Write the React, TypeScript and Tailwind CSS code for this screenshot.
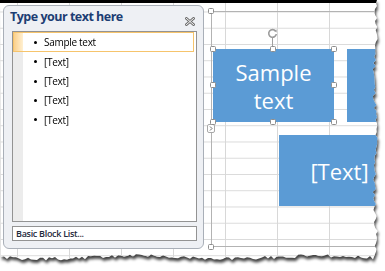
import React from 'react';

// torn paper edge on the right and bottom of the screenshot
function tornEdge() {
  let seed = 11;
  const rnd = () => {
    seed = (seed * 9301 + 49297) % 233280;
    return seed / 233280;
  };
  const pts: string[] = ['0px 0px', '377px 0px'];
  for (let y = 3; y <= 252; y += 3) {
    const x = 373.5 + rnd() * 3.5 + Math.sin(y / 17) * 1;
    pts.push(`${x.toFixed(1)}px ${y}px`);
  }
  for (let x = 373; x >= 0; x -= 3) {
    const y = 255.5 + rnd() * 3.5 + Math.sin(x / 29) * 1.5;
    pts.push(`${x}px ${y.toFixed(1)}px`);
  }
  return `polygon(${pts.join(',')})`;
}

const rows = ['Sample text', '[Text]', '[Text]', '[Text]', '[Text]'];

const handles = [
  'left-[213px] top-[49px]',
  'left-[273px] top-[49px]',
  'left-[334px] top-[49px]',
  'left-[213px] top-[85px]',
  'left-[334px] top-[85px]',
  'left-[213px] top-[122px]',
  'left-[273px] top-[122px]',
  'left-[334px] top-[122px]',
  'left-[211px] top-[11px]',
  'left-[211px] top-[247px]',
];

function CloseIcon() {
  return (
    <svg width="10" height="9" viewBox="0 0 10 9">
      <path d="M1.5 1.5 L8.5 7.5 M8.5 1.5 L1.5 7.5" stroke="#707070" strokeWidth="2.8" strokeLinecap="square" />
      <path d="M1.5 1.5 L8.5 7.5 M8.5 1.5 L1.5 7.5" stroke="#f4f4f4" strokeWidth="1" strokeLinecap="square" />
    </svg>
  );
}

function RotateHandle() {
  return (
    <svg width="11" height="11" viewBox="0 0 11 11">
      <path d="M8.6 3.2 A3.8 3.8 0 1 0 9.3 6" fill="none" stroke="#9c9c9c" strokeWidth="1.6" />
      <path d="M6.8 2.6 L9.6 1.6 L9.6 4.6 Z" fill="#9c9c9c" />
    </svg>
  );
}

function TextPane() {
  return (
    <div className="absolute left-[3px] top-[5px] w-[201px] h-[244px] rounded-[6px] border border-[#a9afb8] bg-[#eef0f4] flex flex-col">
      <div className="h-[25px] flex items-start justify-between pl-[6px] pr-[8px] pt-[3px]">
        <span className="text-[12.5px] leading-[16px] font-bold text-[#1c3d73] tracking-[-0.5px]">Type your text here</span>
        <span className="mt-[8px]">
          <CloseIcon />
        </span>
      </div>
      <div className="relative ml-[8px] mr-[6px] h-[191px] border border-[#939393] bg-white">
        <div className="absolute left-0 top-0 bottom-0 w-[10px] bg-[#ececec]" />
        <div className="relative flex flex-col">
          {rows.map((t, i) => (
            <div
              key={i}
              className={
                i === 0
                  ? 'flex items-center h-[20px] mr-[2px] border border-[#f6c46c] bg-white'
                  : 'flex items-center h-[19.4px]'
              }
            >
              {i === 0 ? (
                <div className="w-[9px] h-full bg-gradient-to-r from-[#fbd08a] to-[#fff0d2]" />
              ) : (
                <div className="w-[10px] h-full" />
              )}
              <span className="ml-[11px] w-[3px] h-[3px] rounded-full bg-black" />
              <span className="ml-[7px] text-[10px] leading-[14px] tracking-[-0.3px] text-black">{t}</span>
            </div>
          ))}
        </div>
      </div>
      <div className="ml-[8px] mr-[6px] mt-[4px] h-[15px] border border-[#939393] bg-white flex items-center pl-[3px]">
        <span className="text-[9px] leading-[12px] font-semibold tracking-[-0.3px] text-[#1f2a3c]">Basic Block List...</span>
      </div>
    </div>
  );
}

export default function App() {
  const clip = tornEdge();
  return (
    <div className="relative w-[385px] h-[271px] bg-white overflow-hidden font-['Open_Sans','Noto_Sans',sans-serif]">
      <div className="[filter:drop-shadow(1.5px_3px_1.5px_rgba(0,0,0,0.75))]">
        <div
          className="relative w-[380px] h-[262px] bg-white [background-image:linear-gradient(to_right,#d8d8d8_1px,transparent_1px),linear-gradient(to_bottom,#dadada_1px,transparent_1px)] [background-size:52px_16.25px] [background-position:17px_11.5px]"
          style={{ clipPath: clip }}
        >
          <div className="absolute left-0 top-0 w-full h-[3px] bg-black" />

          {/* smartart frame */}
          <div className="absolute left-[211px] top-[11px] w-[200px] h-[236px] border border-[#b3b3b3]" />
          <div className="absolute left-[207px] top-[124px] w-[8px] h-[9px] rounded-[2px] border border-[#a8a8a8] bg-white flex items-center justify-center">
            <svg width="4" height="5" viewBox="0 0 4 5">
              <path d="M1 0.5 L3 2.5 L1 4.5" fill="none" stroke="#6a6a6a" strokeWidth="1" />
            </svg>
          </div>

          {/* shapes */}
          <div className="absolute left-[213px] top-[49px] w-[121px] h-[73px] bg-[#5b9bd5] flex items-center justify-center text-center text-white text-[22px] leading-[28px]">
            Sample
            <br />
            text
          </div>
          <div className="absolute left-[347px] top-[49px] w-[121px] h-[73px] bg-[#5b9bd5]" />
          <div className="absolute left-[279px] top-[135px] w-[121px] h-[71px] bg-[#5b9bd5] flex items-center justify-center text-white text-[22px] leading-[28px]">
            [Text]
          </div>

          {/* selection handles */}
          <div className="absolute left-[272px] top-[38px] w-px h-[11px] bg-[#a0a0a0]" />
          <div className="absolute left-[267px] top-[28px]">
            <RotateHandle />
          </div>
          {handles.map((h, i) => (
            <div
              key={i}
              className={`absolute ${h} w-[6px] h-[6px] -translate-x-1/2 -translate-y-1/2 rounded-[1.5px] border border-[#8e8e8e] bg-white`}
            />
          ))}

          <TextPane />
        </div>
      </div>
    </div>
  );
}
